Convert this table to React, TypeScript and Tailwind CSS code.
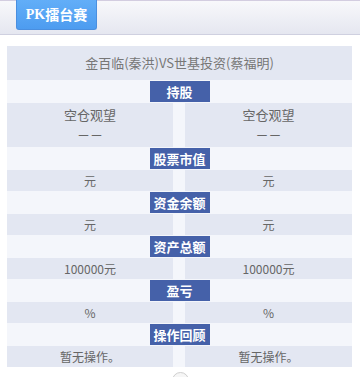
import React from "react";

interface Section {
  label: string;
  left: string[];
  right: string[];
  tall?: boolean;
}

const sections: Section[] = [
  { label: "持股", left: ["空仓观望", "－－"], right: ["空仓观望", "－－"], tall: true },
  { label: "股票市值", left: ["元"], right: ["元"] },
  { label: "资金余额", left: ["元"], right: ["元"] },
  { label: "资产总额", left: ["100000元"], right: ["100000元"] },
  { label: "盈亏", left: ["%"], right: ["%"] },
  { label: "操作回顾", left: ["暂无操作。"], right: ["暂无操作。"] },
];

function Cell({ lines, tall }: { lines: string[]; tall?: boolean }) {
  return (
    <div
      className={
        tall
          ? "bg-[#e3e7f2] text-center text-[13px] leading-[20px] py-[2px] text-[#666]"
          : "bg-[#e3e7f2] text-center text-[12px] leading-[21px] h-[21px] text-[#666]"
      }
    >
      {lines.map((l, i) => (
        <div key={i}>{l}</div>
      ))}
    </div>
  );
}

export default function App() {
  return (
    <div
      className="bg-white w-[360px] min-h-[377px]"
      style={{ fontFamily: '"Noto Sans CJK SC", "Noto Sans", sans-serif' }}
    >
      {/* top tab bar */}
      <div className="h-[35px] border-t border-[#d3cde0] border-b border-b-[#cfd0e0] bg-gradient-to-b from-[#f8f8fb] to-[#e5e7f0] pl-[16px]">
        <div className="w-[81px] h-[30px] -mt-px bg-gradient-to-b from-[#62aef8] to-[#4d9cf0] border border-[#4a8fe0] border-t-0 rounded-b-[3px] flex items-center justify-center text-white font-bold text-[14px]">
          <span style={{ fontFamily: '"Liberation Serif", "Noto Sans CJK SC", serif' }}>PK</span>
          <span>擂台赛</span>
        </div>
      </div>

      <div className="mt-[11px] ml-[7px] w-[345px]">
        <div className="h-[34px] bg-[#e3e7f2] flex items-center justify-center text-[13px] text-[#777]">
          金百临(秦洪)VS世基投资(蔡福明)
        </div>

        {sections.map((s) => (
          <div key={s.label}>
            <div className="h-[23px] bg-[#f4f6fb] flex justify-center pt-px">
              <div className="w-[60px] h-[21px] bg-[#4561a9] text-white font-bold text-[13px] leading-[21px] text-center">
                {s.label}
              </div>
            </div>
            <div className="grid grid-cols-[166px_12px_1fr] bg-[#f4f6fb]">
              <Cell lines={s.left} tall={s.tall} />
              <div />
              <Cell lines={s.right} tall={s.tall} />
            </div>
          </div>
        ))}
      </div>

      <div className="flex justify-center mt-[5px] pb-2">
        <div className="w-[17px] h-[17px] rounded-full border border-[#cfcfcf] bg-[#f6f6f6]" />
      </div>
    </div>
  );
}
